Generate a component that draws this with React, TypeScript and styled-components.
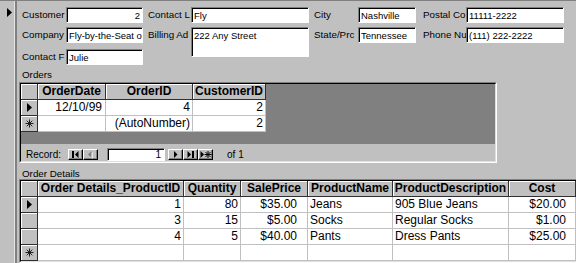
import styled, { createGlobalStyle } from "styled-components";

type Align = "left" | "right";
type Marker = "current" | "none" | "new";

interface Column {
  title: string;
  width: number;
  align: Align;
  pad?: number;
}

interface Row {
  marker: Marker;
  cells: string[];
}

interface Field {
  label: string;
  value: string;
  col: number;
  row: number;
  align?: Align;
  tall?: boolean;
}

// labels and values are cut by their controls, as in the form
const fields: Field[] = [
  { label: "Customer", value: "2", col: 0, row: 1, align: "right" },
  { label: "Contact L", value: "Fly", col: 1, row: 1 },
  { label: "City", value: "Nashville", col: 2, row: 1 },
  { label: "Postal Co", value: "11111-2222", col: 3, row: 1 },
  { label: "Company", value: "Fly-by-the-Seat o", col: 0, row: 2 },
  { label: "Billing Ad", value: "222 Any Street", col: 1, row: 2, tall: true },
  { label: "State/Prc", value: "Tennessee", col: 2, row: 2 },
  { label: "Phone Nu", value: "(111) 222-2222", col: 3, row: 2 },
  { label: "Contact F", value: "Julie", col: 0, row: 3 },
];

const labelIndent = [0, 5, 5, 7];

const orderColumns: Column[] = [
  { title: "OrderDate", width: 68, align: "right", pad: 3 },
  { title: "OrderID", width: 87, align: "right" },
  { title: "CustomerID", width: 73, align: "right" },
];

const orderRows: Row[] = [
  { marker: "current", cells: ["12/10/99", "4", "2"] },
  { marker: "new", cells: ["", "(AutoNumber)", "2"] },
];

const detailColumns: Column[] = [
  { title: "Order Details_ProductID", width: 146, align: "right" },
  { title: "Quantity", width: 57, align: "right" },
  { title: "SalePrice", width: 67, align: "right", pad: 10 },
  { title: "ProductName", width: 85, align: "left" },
  { title: "ProductDescription", width: 116, align: "left" },
  { title: "Cost", width: 67, align: "right", pad: 9 },
];

const detailRows: Row[] = [
  { marker: "current", cells: ["1", "80", "$35.00", "Jeans", "905 Blue Jeans", "$20.00"] },
  { marker: "none", cells: ["3", "15", "$5.00", "Socks", "Regular Socks", "$1.00"] },
  { marker: "none", cells: ["4", "5", "$40.00", "Pants", "Dress Pants", "$25.00"] },
  { marker: "new", cells: ["", "", "", "", "", ""] },
];

const Pointer = () => (
  <svg width="5" height="9" viewBox="0 0 5 9">
    <polygon points="0,0 5,4.5 0,9" fill="#000" />
  </svg>
);

const NewStar = () => (
  <svg width="9" height="9" viewBox="0 0 9 9">
    <path
      d="M4.5 0.5V8.5M0.5 4.5H8.5M1.7 1.7L7.3 7.3M7.3 1.7L1.7 7.3"
      stroke="#202020"
      strokeWidth="1"
    />
  </svg>
);

type NavKind = "first" | "prev" | "next" | "last" | "new";

const NavGlyph = ({ kind }: { kind: NavKind }) => (
  <svg width="13" height="9" viewBox="0 0 13 9">
    {kind === "first" && (
      <>
        <rect x="3" y="1" width="2" height="7" fill="#000" />
        <polygon points="9.5,1 9.5,8 6,4.5" fill="#000" />
      </>
    )}
    {kind === "prev" && (
      <>
        <polygon points="8.5,2 8.5,9 5,5.5" fill="#fff" />
        <polygon points="7.5,1 7.5,8 4,4.5" fill="#808080" />
      </>
    )}
    {kind === "next" && <polygon points="5,1 5,8 8.5,4.5" fill="#000" />}
    {kind === "last" && (
      <>
        <polygon points="3.5,1 3.5,8 7,4.5" fill="#000" />
        <rect x="8" y="1" width="2" height="7" fill="#000" />
      </>
    )}
    {kind === "new" && (
      <>
        <polygon points="1.5,1 1.5,8 5,4.5" fill="#000" />
        <path
          d="M9 1V8M5.5 4.5H12.5M6.5 2L11.5 7M11.5 2L6.5 7"
          stroke="#000"
          strokeWidth="1"
        />
      </>
    )}
  </svg>
);

const Datasheet = ({ columns, rows }: { columns: Column[]; rows: Row[] }) => {
  const template = `17px ${columns.map((c) => `${c.width}px`).join(" ")}`;
  return (
    <>
      <GridRow $cols={template}>
        <SelectorCell />
        {columns.map((c) => (
          <HeadCell key={c.title}>{c.title}</HeadCell>
        ))}
      </GridRow>
      {rows.map((r, i) => (
        <GridRow key={i} $cols={template}>
          <SelectorCell>
            {r.marker === "current" && <Pointer />}
            {r.marker === "new" && <NewStar />}
          </SelectorCell>
          {r.cells.map((v, j) => (
            <DataCell
              key={j}
              $align={columns[j].align}
              $pad={columns[j].pad ?? 2}
            >
              {v}
            </DataCell>
          ))}
        </GridRow>
      ))}
    </>
  );
};

export default function App() {
  return (
    <>
      <GlobalStyle />
      <Window>
        <RecordStrip>
          <Pointer />
        </RecordStrip>
        <Main>
          <FieldGrid>
            {fields.map((f) => (
              <FieldPair key={f.label}>
                <FieldLabel
                  $col={f.col * 2 + 1}
                  $row={f.row}
                  $indent={labelIndent[f.col]}
                >
                  {f.label}
                </FieldLabel>
                <TextBox
                  $col={f.col * 2 + 2}
                  $row={f.row}
                  $align={f.align ?? "left"}
                  $tall={!!f.tall}
                >
                  {f.value}
                </TextBox>
              </FieldPair>
            ))}
          </FieldGrid>

          <SectionLabel $height={17} $top={4}>
            Orders
          </SectionLabel>
          <Subform $width={478}>
            <SubformBody>
              <Datasheet columns={orderColumns} rows={orderRows} />
              <EmptyArea />
              <NavBar>
                <span>Record:</span>
                <NavButton $gap={7}>
                  <NavGlyph kind="first" />
                </NavButton>
                <NavButton $gap={0}>
                  <NavGlyph kind="prev" />
                </NavButton>
                <RecordBox>1</RecordBox>
                <NavButton $gap={3}>
                  <NavGlyph kind="next" />
                </NavButton>
                <NavButton $gap={0}>
                  <NavGlyph kind="last" />
                </NavButton>
                <NavButton $gap={0}>
                  <NavGlyph kind="new" />
                </NavButton>
                <RecordCount>of 1</RecordCount>
              </NavBar>
            </SubformBody>
          </Subform>

          <SectionLabel $height={16} $top={5}>
            Order Details
          </SectionLabel>
          <Subform $width={562}>
            <SubformBody>
              <Datasheet columns={detailColumns} rows={detailRows} />
            </SubformBody>
          </Subform>
        </Main>
      </Window>
    </>
  );
}

const GlobalStyle = createGlobalStyle`
  html, body {
    margin: 0;
    padding: 0;
    background: #c0c0c0;
  }
  body {
    font-family: "Liberation Sans", Arial, sans-serif;
    color: #000;
  }
`;

const Window = styled.div`
  display: flex;
  width: 576px;
  height: 263px;
  overflow: hidden;
  box-sizing: border-box;
  background: #c0c0c0;
  border-top: 1px solid #808080;
`;

const RecordStrip = styled.div`
  flex: none;
  width: 15px;
  box-sizing: border-box;
  padding: 2px 0 0 7px;
  border-right: 1px solid #e4e4e4;
`;

const Main = styled.div`
  flex: 1;
  min-width: 0;
  display: flex;
  flex-direction: column;
  border-left: 2px solid #808080;
`;

const FieldGrid = styled.div`
  display: grid;
  grid-template-columns: 44px 77px 48px 118px 49px 58px 50px 98px;
  grid-template-rows: 20px 22px 16px;
  margin-top: 6px;
  padding-left: 5px;
`;

const FieldPair = styled.div`
  display: contents;
`;

const FieldLabel = styled.div<{ $col: number; $row: number; $indent: number }>`
  grid-column: ${(p) => p.$col};
  grid-row: ${(p) => p.$row};
  height: 16px;
  padding: 0 1px 0 ${(p) => p.$indent}px;
  font-size: 9.8px;
  line-height: 16px;
  white-space: nowrap;
  overflow: hidden;
`;

const TextBox = styled.div<{ $col: number; $row: number; $align: Align; $tall: boolean }>`
  grid-column: ${(p) => p.$col};
  grid-row: ${(p) => (p.$tall ? `${p.$row} / span 2` : p.$row)};
  align-self: start;
  height: ${(p) => (p.$tall ? 30 : 16)}px;
  box-sizing: border-box;
  padding: 1px 2px 0 2px;
  background: #fff;
  border: 1px solid;
  border-color: #808080 #fff #fff #808080;
  box-shadow: inset 1px 1px 0 #000;
  font-size: 9.5px;
  line-height: 13px;
  text-align: ${(p) => p.$align};
  white-space: nowrap;
  overflow: hidden;
`;

const SectionLabel = styled.div<{ $height: number; $top: number }>`
  height: ${(p) => p.$height}px;
  box-sizing: border-box;
  padding: ${(p) => p.$top}px 0 0 5px;
  font-size: 9.8px;
  line-height: 11px;
  flex: none;
`;

const Subform = styled.div<{ $width: number }>`
  flex: none;
  width: ${(p) => p.$width}px;
  margin-left: 2px;
  box-sizing: border-box;
  border: 1px solid;
  border-color: #808080 #fff #fff #808080;
`;

const SubformBody = styled.div`
  display: flex;
  flex-direction: column;
  background: #808080;
  border: 1px solid;
  border-color: #000 #dfdfdf #dfdfdf #000;
`;

const GridRow = styled.div<{ $cols: string }>`
  display: grid;
  grid-template-columns: ${(p) => p.$cols};
  width: max-content;
  height: 16px;
`;

const HeadCell = styled.div`
  box-sizing: border-box;
  background: #c0c0c0;
  border-right: 1px solid #303030;
  border-bottom: 1px solid #303030;
  box-shadow: inset 1px 1px 0 #fff;
  font-size: 12px;
  font-weight: bold;
  line-height: 15px;
  text-align: center;
  white-space: nowrap;
  overflow: hidden;
`;

const SelectorCell = styled.div`
  box-sizing: border-box;
  display: flex;
  align-items: center;
  justify-content: center;
  background: #c0c0c0;
  border-right: 1px solid #303030;
  border-bottom: 1px solid #303030;
  box-shadow: inset 1px 1px 0 #fff;
`;

const DataCell = styled.div<{ $align: Align; $pad: number }>`
  box-sizing: border-box;
  background: #fff;
  border-right: 1px solid #c0c0c0;
  border-bottom: 1px solid #c0c0c0;
  padding: ${(p) => (p.$align === "right" ? `0 ${p.$pad}px 0 2px` : "0 2px 0 2px")};
  font-size: 12px;
  line-height: 15px;
  text-align: ${(p) => p.$align};
  white-space: nowrap;
  overflow: hidden;
`;

const EmptyArea = styled.div`
  height: 12px;
`;

const NavBar = styled.div`
  display: flex;
  align-items: center;
  height: 17px;
  box-sizing: border-box;
  padding: 3px 0 0 5px;
  background: #c0c0c0;
  font-size: 10px;
`;

const NavButton = styled.div<{ $gap: number }>`
  display: flex;
  align-items: center;
  justify-content: center;
  width: 15px;
  height: 11px;
  box-sizing: border-box;
  margin-left: ${(p) => p.$gap}px;
  background: #c0c0c0;
  border: 1px solid;
  border-color: #fff #000 #000 #fff;
  box-shadow: inset -1px -1px 0 #808080;
`;

const RecordBox = styled.div`
  width: 58px;
  height: 13px;
  box-sizing: border-box;
  margin-left: 9px;
  padding-right: 3px;
  background: #fff;
  border: 1px solid;
  border-color: #808080 #fff #fff #808080;
  box-shadow: inset 1px 1px 0 #000;
  font-size: 10px;
  line-height: 11px;
  text-align: right;
`;

const RecordCount = styled.span`
  margin-left: 14px;
`;
